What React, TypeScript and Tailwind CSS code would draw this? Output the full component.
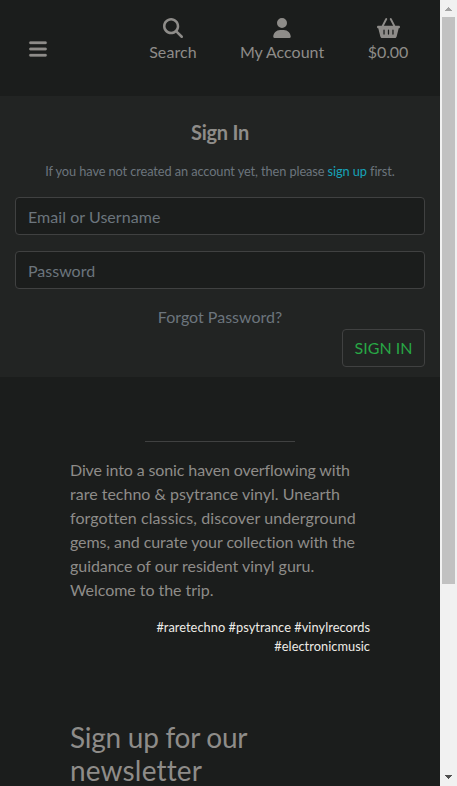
import React from "react";
import { FaBars, FaMagnifyingGlass, FaUser, FaBasketShopping } from "react-icons/fa6";

function NavItem({ icon, label, className }: { icon: React.ReactNode; label: string; className: string }) {
  return (
    <a className={`flex flex-col items-center whitespace-nowrap ${className}`}>
      <span className="flex h-5 items-center text-[20px]">{icon}</span>
      <span className="mt-0.5 leading-6">{label}</span>
    </a>
  );
}

function Header() {
  return (
    <header className="flex h-24 shrink-0 items-start pt-[18px] text-[#8e8c89]">
      <FaBars className="mt-[20.5px] ml-7 h-5 w-5 shrink-0 stroke-current [stroke-width:8]" />
      <NavItem className="ml-[101px] w-12 tracking-[0.1px]" icon={<FaMagnifyingGlass />} label="Search" />
      <NavItem className="ml-[43px] w-[84px]" icon={<FaUser />} label="My Account" />
      <NavItem
        className="ml-[43px] w-[42px] tracking-[-0.1px]"
        icon={<FaBasketShopping className="h-[20.5px] w-[23px]" />}
        label="$0.00"
      />
    </header>
  );
}

const inputClass =
  "block h-[38px] w-full rounded border border-[#404141] bg-[#1b1d1c] px-3 text-base text-[#6c757d] placeholder:text-[#6c757d] placeholder:opacity-100 outline-none";

function SignIn() {
  return (
    <section className="flex h-[281px] shrink-0 flex-col bg-[#222423] px-[15px] pt-6 text-[#6c757d]">
      <h1 className="text-center text-[20px] leading-6 font-bold tracking-[-0.25px] text-[#8e8c89]">Sign In</h1>
      <p className="mt-4 mb-[14px] text-center text-[12.8px] leading-[23px] tracking-[-0.105px] whitespace-nowrap">
        If you have not created an account yet, then please <a className="text-[#17a2b8]">sign up</a> first.
      </p>
      <input className={`tracking-[0.05px] ${inputClass}`} placeholder="Email or Username" />
      <input className={`mt-4 ${inputClass}`} type="password" placeholder="Password" />
      <a className="mt-4 text-center leading-6">Forgot Password?</a>
      <button className="h-[38px] w-[83px] self-end rounded border border-[#404141] text-base leading-6 text-[#28a745]">
        SIGN IN
      </button>
    </section>
  );
}

function About() {
  return (
    <footer className="mx-auto w-[300px] pt-16 text-[#8e8c89]">
      <hr className="mx-auto w-[150px] border-[#404141]" />
      <p className="mt-4 leading-6">
        <span className="tracking-[-0.12px]">Dive into a sonic haven overflowing with </span>
        <span>rare techno &amp; psytrance vinyl. Unearth </span>
        <span className="tracking-[0.09px]">forgotten classics, discover underground </span>
        <span className="tracking-[-0.07px]">gems, and curate your collection with the </span>
        <span className="tracking-[-0.05px]">guidance of our resident vinyl guru. Welcome to the trip.</span>
      </p>
      <p className="mt-4 text-right text-[12.8px] leading-[19.2px] tracking-[0.04px] text-[#eeece7]">
        #raretechno #psytrance #vinylrecords #electronicmusic
      </p>
      <h2 className="mt-[65px] text-[28px] leading-[33px] tracking-[-0.27px]">
        Sign up for our <span className="tracking-[0.15px]">newsletter</span>
      </h2>
    </footer>
  );
}

function Scrollbar() {
  return (
    <div className="flex w-[17px] shrink-0 flex-col items-center bg-[#f1f1f1]">
      <svg className="h-[17px] w-[17px] shrink-0" viewBox="0 0 17 17" fill="#a3a3a3" shapeRendering="crispEdges">
        <path d="M8 7h1v1h1v1h1v1h1v1H5v-1h1V9h1V8h1z" />
      </svg>
      <div className="h-[567px] w-[13px] shrink-0 bg-[#c1c1c1]" />
      <svg className="mt-auto h-[17px] w-[17px] shrink-0" viewBox="0 0 17 17" fill="#505050" shapeRendering="crispEdges">
        <path d="M5 6h7v1h-1v1h-1v1H9v1H8V9H7V8H6V7H5z" />
      </svg>
    </div>
  );
}

export default function App() {
  return (
    <div className="flex h-[786px] w-[457px] overflow-hidden bg-[#1b1d1c] font-[Lato,sans-serif] text-base [font-variant-ligatures:none]">
      <main className="flex w-[440px] shrink-0 flex-col overflow-hidden">
        <Header />
        <SignIn />
        <About />
      </main>
      <Scrollbar />
    </div>
  );
}
